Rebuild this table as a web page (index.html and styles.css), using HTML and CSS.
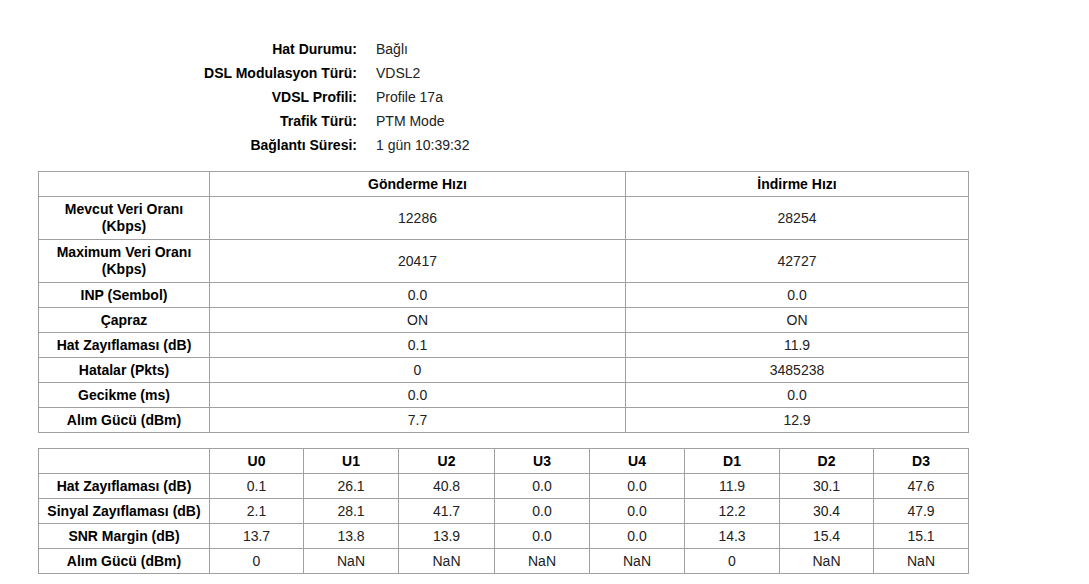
FILE: index.html
```html
<!DOCTYPE html>
<html lang="tr">
<head>
<meta charset="utf-8">
<title>DSL Durumu</title>
<link rel="stylesheet" href="styles.css">
</head>
<body>
<div class="page">
  <div class="info">
    <div class="label">Hat Durumu:</div><div class="value">Bağlı</div>
    <div class="label">DSL Modulasyon Türü:</div><div class="value">VDSL2</div>
    <div class="label">VDSL Profili:</div><div class="value">Profile 17a</div>
    <div class="label">Trafik Türü:</div><div class="value">PTM Mode</div>
    <div class="label">Bağlantı Süresi:</div><div class="value">1 gün 10:39:32</div>
  </div>

  <table class="grid rates">
    <colgroup>
      <col class="c-first"><col class="c-up"><col class="c-down">
    </colgroup>
    <tr><th></th><th>Gönderme Hızı</th><th>İndirme Hızı</th></tr>
    <tr class="two"><th>Mevcut Veri Oranı<br>(Kbps)</th><td>12286</td><td>28254</td></tr>
    <tr class="two"><th>Maximum Veri Oranı<br>(Kbps)</th><td>20417</td><td>42727</td></tr>
    <tr><th>INP (Sembol)</th><td>0.0</td><td>0.0</td></tr>
    <tr><th>Çapraz</th><td>ON</td><td>ON</td></tr>
    <tr><th>Hat Zayıflaması (dB)</th><td>0.1</td><td>11.9</td></tr>
    <tr><th>Hatalar (Pkts)</th><td>0</td><td>3485238</td></tr>
    <tr><th>Gecikme (ms)</th><td>0.0</td><td>0.0</td></tr>
    <tr><th>Alım Gücü (dBm)</th><td>7.7</td><td>12.9</td></tr>
  </table>

  <table class="grid bands">
    <colgroup>
      <col class="c-first">
      <col class="c-b94"><col class="c-b95"><col class="c-b96"><col class="c-b95">
      <col class="c-b95"><col class="c-b95"><col class="c-b94"><col class="c-b95">
    </colgroup>
    <tr><th></th><th>U0</th><th>U1</th><th>U2</th><th>U3</th><th>U4</th><th>D1</th><th>D2</th><th>D3</th></tr>
    <tr><th>Hat Zayıflaması (dB)</th><td>0.1</td><td>26.1</td><td>40.8</td><td>0.0</td><td>0.0</td><td>11.9</td><td>30.1</td><td>47.6</td></tr>
    <tr><th>Sinyal Zayıflaması (dB)</th><td>2.1</td><td>28.1</td><td>41.7</td><td>0.0</td><td>0.0</td><td>12.2</td><td>30.4</td><td>47.9</td></tr>
    <tr><th>SNR Margin (dB)</th><td>13.7</td><td>13.8</td><td>13.9</td><td>0.0</td><td>0.0</td><td>14.3</td><td>15.4</td><td>15.1</td></tr>
    <tr><th>Alım Gücü (dBm)</th><td>0</td><td>NaN</td><td>NaN</td><td>NaN</td><td>NaN</td><td>0</td><td>NaN</td><td>NaN</td></tr>
  </table>
</div>
</body>
</html>
```

FILE: styles.css
```css
body {
  margin: 8px;
  background: #ffffff;
  font-family: "Liberation Sans", Arial, sans-serif;
  font-size: 14px;
  color: #333333;
}

.page {
  padding: 29px 0 0 30px;
}

.info {
  display: grid;
  grid-template-columns: 319px auto;
  column-gap: 19px;
  grid-auto-rows: 24px;
  align-items: center;
}

.info .label {
  text-align: right;
  font-weight: bold;
  color: #000000;
}

.info .value {
  color: #222222;
}

.grid {
  border-collapse: collapse;
  table-layout: fixed;
  width: 930px;
}

.rates {
  margin-top: 14px;
}

.bands {
  margin-top: 15px;
}

.grid th,
.grid td {
  border: 1px solid #a0a0a0;
  text-align: center;
  line-height: 17px;
  padding: 4px 2px 3px;
}

.grid th {
  font-weight: bold;
  color: #000000;
}

.grid td {
  color: #222222;
}

.grid tr.two th,
.grid tr.two td {
  padding-top: 4px;
  padding-bottom: 4px;
}

.c-first { width: 171px; }
.c-up { width: 416px; }
.c-down { width: 343px; }
.c-b94 { width: 94px; }
.c-b95 { width: 95px; }
.c-b96 { width: 96px; }
```
